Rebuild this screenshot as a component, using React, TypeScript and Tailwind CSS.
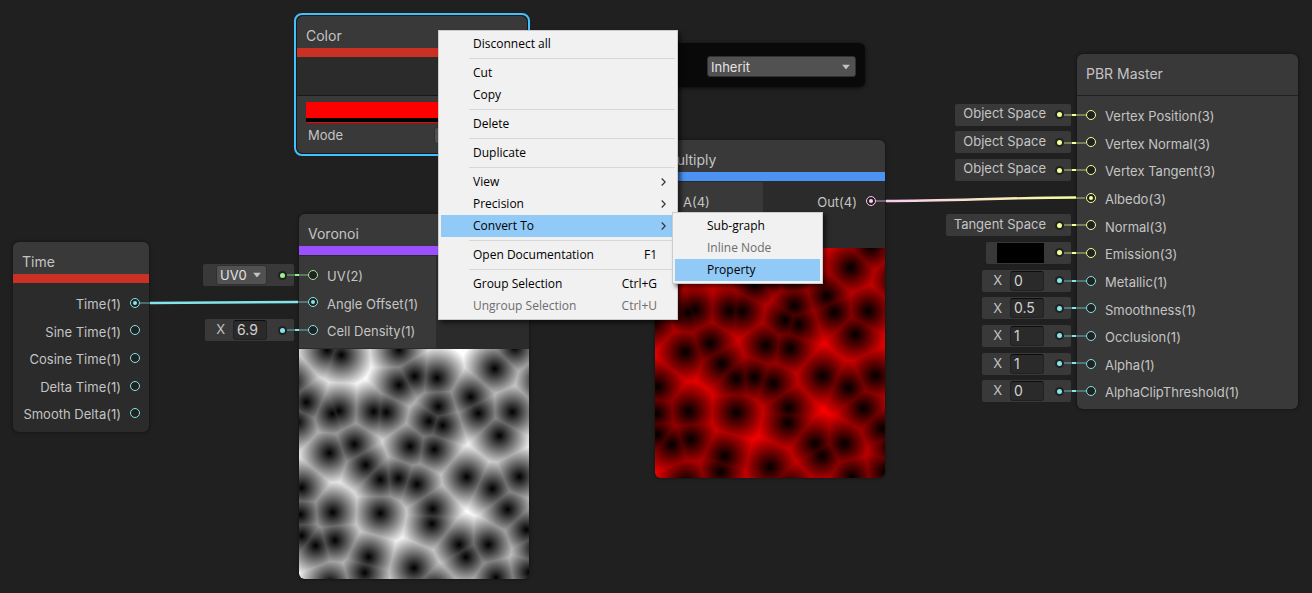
import React from "react";

type Tone = "cyan" | "yellow" | "green" | "pink";

const TONE_TEXT: Record<Tone, string> = {
  cyan: "text-[#84e4e7]",
  yellow: "text-[#f6ff9a]",
  green: "text-[#9aef92]",
  pink: "text-[#fbcbf4]",
};

const TONE_HEX: Record<Tone, string> = {
  cyan: "#84e4e7",
  yellow: "#f6ff9a",
  green: "#9aef92",
  pink: "#fbcbf4",
};

/* ---------- Voronoi preview ---------- */

type Point = [number, number];

const SEEDS: Point[] = [
  [85, 3], [127, 18], [300, 2], [648, -4], [347, 82], [300, 108], [414, 87], [587, 59],
  [22, 160], [100, 194], [120, 186], [224, 188], [262, 190], [418, 173], [390, 217],
  [431, 229], [515, 144], [538, 193], [640, 189], [601, 260], [-6, 220], [166, 286],
  [91, 312], [200, 348], [333, 292], [406, 301], [244, 392], [298, 388], [354, 406],
  [503, 384], [580, 419], [661, 383], [8, 416], [101, 490], [4, 497], [244, 493],
  [401, 480], [399, 524], [626, 481], [682, 542], [480, 587], [501, 624], [568, 587],
  [8, 560], [50, 590], [108, 574], [209, 624], [197, 671], [345, 657], [93, 702],
  [591, 687], [690, 670], [726, 95], [710, 598], [405, 718], [-22, 100],
];

const SIZE = 690;
const REACH = 102;

function cellFor(index: number): Point[] {
  const [sx, sy] = SEEDS[index];
  let poly: Point[] = [
    [sx - 200, sy - 200],
    [sx + 200, sy - 200],
    [sx + 200, sy + 200],
    [sx - 200, sy + 200],
  ];
  SEEDS.forEach(([ox, oy], other) => {
    if (other === index) return;
    const nx = ox - sx;
    const ny = oy - sy;
    const limit = (nx * (ox + sx) + ny * (oy + sy)) / 2;
    const side = (p: Point) => p[0] * nx + p[1] * ny - limit;
    const next: Point[] = [];
    poly.forEach((a, i) => {
      const b = poly[(i + 1) % poly.length];
      const da = side(a);
      const db = side(b);
      if (da <= 0) next.push(a);
      if (da < 0 !== db < 0) {
        const t = da / (da - db);
        next.push([a[0] + (b[0] - a[0]) * t, a[1] + (b[1] - a[1]) * t]);
      }
    });
    poly = next;
  });
  return poly;
}

const CELLS = SEEDS.map((_, i) => cellFor(i).map((p) => p.map((v) => v.toFixed(1)).join(",")).join(" "));

function VoronoiPreview({ id, color }: { id: string; color: string }) {
  return (
    <svg viewBox={`0 0 ${SIZE} ${SIZE}`} className="block aspect-square w-full rounded-b-md" aria-hidden="true">
      <defs>
        {SEEDS.map(([x, y], i) => (
          <radialGradient key={i} id={`${id}-${i}`} gradientUnits="userSpaceOnUse" cx={x} cy={y} r={REACH}>
            <stop offset="0" stopColor="#000" />
            <stop offset="1" stopColor={color} />
          </radialGradient>
        ))}
      </defs>
      {CELLS.map((points, i) => (
        <polygon key={i} points={points} fill={`url(#${id}-${i})`} stroke={`url(#${id}-${i})`} strokeWidth="3" />
      ))}
    </svg>
  );
}

/* ---------- Node parts ---------- */

function Port({ tone, connected }: { tone: Tone; connected?: boolean }) {
  return (
    <span className={`flex size-[10px] shrink-0 items-center justify-center rounded-full border border-current bg-[#212121] ${TONE_TEXT[tone]}`}>
      {connected && <span className="size-1 rounded-full bg-current" />}
    </span>
  );
}

function InputRow({ label, tone, connected }: { label: string; tone: Tone; connected?: boolean }) {
  return (
    <li className="flex items-center gap-[9px] pl-[9px]">
      <Port tone={tone} connected={connected} />
      <span className="pt-1">{label}</span>
    </li>
  );
}

function OutputRow({ label, tone, connected }: { label: string; tone: Tone; connected?: boolean }) {
  return (
    <li className="flex items-center justify-end gap-[9px] pr-[9px]">
      <span className="pt-1">{label}</span>
      <Port tone={tone} connected={connected} />
    </li>
  );
}

function NodeHeader({ title, stripe }: { title: string; stripe: string }) {
  return (
    <header>
      <h2 className="h-8 rounded-t-md bg-[#393939] px-[9px] pt-[9px] text-sm leading-[22px]">{title}</h2>
      <div className={`h-[9px] ${stripe}`} />
    </header>
  );
}

const NODE = "absolute rounded-md bg-[#2b2b2b] shadow-[0_0_0_1px_#191919,0_0_4px_#0006]";

function Chip({ children, tone, wide }: { children: React.ReactNode; tone: Tone; wide?: boolean }) {
  return (
    <div className={`flex h-[22px] items-center rounded-xs bg-[#393939] pr-[7px] whitespace-nowrap ${wide ? "gap-[9px] pl-2" : "gap-[11px] pl-[11px]"}`}>
      {children}
      <span className={`flex size-[9px] items-center justify-center rounded-full bg-[#212121] ${TONE_TEXT[tone]}`}>
        <span className="size-[5px] rounded-full bg-current" />
      </span>
    </div>
  );
}

function NumberChip({ id, value }: { id: string; value: string }) {
  return (
    <Chip tone="cyan">
      <div className="flex items-center gap-2">
        <label htmlFor={id} className="text-[13px]">X</label>
        <input
          id={id}
          defaultValue={value}
          className="h-5 w-[34px] rounded-[3px] border border-[#212121] border-t-[#0d0d0d] bg-[#2a2a2a] px-[3px] text-sm text-[#d2d2d2] outline-none"
        />
      </div>
    </Chip>
  );
}

function Dropdown({ id, label, value, className }: { id: string; label: string; value: string; className: string }) {
  return (
    <div className={`relative text-[#e4e4e4] ${className}`}>
      <label htmlFor={id} className="sr-only">{label}</label>
      <select id={id} defaultValue={value} className="block h-full w-full appearance-none rounded-[3px] border border-[#303030] bg-[#515151] px-[3px] text-[13px] leading-4 outline-none">
        <option>{value}</option>
      </select>
      <svg viewBox="0 0 8 5" className="pointer-events-none absolute top-1/2 right-[6px] h-[5px] w-2 -translate-y-1/2 fill-[#c4c4c4]" aria-hidden="true">
        <path d="M0 0h8L4 5z" />
      </svg>
    </div>
  );
}

/* ---------- Wires ---------- */

function Stub({ x, y, tone }: { x: number; y: number; tone: Tone }) {
  return (
    <g stroke={TONE_HEX[tone]} strokeWidth="2">
      <path d={`M${x + 5} ${y}H${x + 27}`} opacity="0.35" />
      <path d={`M${x + 13} ${y}H${x + 17}`} />
    </g>
  );
}

const MASTER_STUBS: { row: number; tone: Tone }[] = [
  { row: 0, tone: "yellow" },
  { row: 1, tone: "yellow" },
  { row: 2, tone: "yellow" },
  { row: 4, tone: "yellow" },
  { row: 5, tone: "yellow" },
  { row: 6, tone: "cyan" },
  { row: 7, tone: "cyan" },
  { row: 8, tone: "cyan" },
  { row: 9, tone: "cyan" },
  { row: 10, tone: "cyan" },
];

function Wires() {
  return (
    <svg width="1312" height="593" className="pointer-events-none absolute top-0 left-0" fill="none" aria-hidden="true">
      <defs>
        <linearGradient id="albedo-wire" gradientUnits="userSpaceOnUse" x1="886" y1="0" x2="1076" y2="0">
          <stop offset="0" stopColor="#fbcbf4" />
          <stop offset="1" stopColor="#f6ff9a" />
        </linearGradient>
      </defs>
      <g stroke="#84e4e7" strokeWidth="2">
        <path d="M140 303H150M298 302H308" opacity="0.35" />
        <path d="M150 303C200 303 250 302 298 302" strokeWidth="2.4" />
      </g>
      <g strokeWidth="2">
        <path d="M876 201H886" stroke="#fbcbf4" opacity="0.35" />
        <path d="M1076 198H1085" stroke="#f6ff9a" opacity="0.35" />
        <path d="M886 201C950 201 1010 197.5 1076 197.5" stroke="url(#albedo-wire)" strokeWidth="2.4" />
      </g>
      <Stub x={282} y={275} tone="green" />
      <Stub x={282} y={330} tone="cyan" />
      {MASTER_STUBS.map(({ row, tone }) => (
        <Stub key={row} x={1059} y={Math.round(115 + row * 27.6)} tone={tone} />
      ))}
    </svg>
  );
}

/* ---------- Context menu ---------- */

interface Item {
  label: string;
  hint?: string;
  submenu?: boolean;
  active?: boolean;
  disabled?: boolean;
}

const MENU_GROUPS: Item[][] = [
  [{ label: "Disconnect all" }],
  [{ label: "Cut" }, { label: "Copy" }],
  [{ label: "Delete" }],
  [{ label: "Duplicate" }],
  [
    { label: "View", submenu: true },
    { label: "Precision", submenu: true },
    { label: "Convert To", submenu: true, active: true },
  ],
  [{ label: "Open Documentation", hint: "F1" }],
  [
    { label: "Group Selection", hint: "Ctrl+G" },
    { label: "Ungroup Selection", hint: "Ctrl+U", disabled: true },
  ],
];

const SUBMENU: Item[] = [
  { label: "Sub-graph" },
  { label: "Inline Node", disabled: true },
  { label: "Property", active: true },
];

function MenuItem({ item }: { item: Item }) {
  return (
    <button
      type="button"
      role="menuitem"
      disabled={item.disabled}
      className={`flex h-[22px] w-full items-center justify-between pl-8 text-left ${item.submenu ? "pr-[9px]" : "pr-[18px]"} ${item.active ? "bg-[#91c9f7]" : ""} ${item.disabled ? "text-[#6d6d6d]" : "text-black"}`}
    >
      <span>{item.label}</span>
      {item.hint && <span>{item.hint}</span>}
      {item.submenu && (
        <svg viewBox="0 0 5 8" className="h-2 w-[5px] fill-none stroke-[#333]" aria-hidden="true">
          <path d="M0.7 0.5L4.2 4L0.7 7.5" strokeWidth="1.2" />
        </svg>
      )}
    </button>
  );
}

const MENU = "absolute border border-[#ccc] bg-[#f1f1f1] p-[2px] font-['Open_Sans','Noto_Sans',sans-serif] text-xs shadow-[3px_3px_4px_#0008]";

function ContextMenu() {
  return (
    <>
      <div role="menu" aria-label="Node actions" className={`${MENU} top-[30px] left-[438px] w-60`}>
        {MENU_GROUPS.map((group, i) => (
          <React.Fragment key={i}>
            {i > 0 && <div role="separator" className="my-[3px] ml-7 h-px bg-[#d7d7d7]" />}
            {group.map((item) => (
              <MenuItem key={item.label} item={item} />
            ))}
          </React.Fragment>
        ))}
      </div>
      <div role="menu" aria-label="Convert To" className={`${MENU} top-[212px] left-[672px] w-[151px]`}>
        {SUBMENU.map((item) => (
          <MenuItem key={item.label} item={item} />
        ))}
      </div>
    </>
  );
}

/* ---------- Graph ---------- */

export default function App() {
  return (
    <main className="relative min-h-screen overflow-hidden bg-[#202020] font-[Inter,sans-serif] text-[13px] text-[#c4c4c4]">
      <section className={`${NODE} top-[242px] left-[13px] w-[136px]`}>
        <NodeHeader title="Time" stripe="bg-[#ca3023]" />
        <ul className="mt-[6px] mb-[5px] grid h-[138px] auto-rows-fr">
          <OutputRow label="Time(1)" tone="cyan" connected />
          <OutputRow label="Sine Time(1)" tone="cyan" />
          <OutputRow label="Cosine Time(1)" tone="cyan" />
          <OutputRow label="Delta Time(1)" tone="cyan" />
          <OutputRow label="Smooth Delta(1)" tone="cyan" />
        </ul>
      </section>

      <section className="absolute top-[13px] left-[294px] w-[236px] rounded-lg border-2 border-[#44c0ff] bg-[#191919] p-px">
        <NodeHeader title="Color" stripe="bg-[#ca3023]" />
        <div className="h-[38px] bg-[#2b2b2b]" />
        <div className="mt-px h-[57px] rounded-b-md bg-[#393939] px-[9px] pt-[6px]">
          <div className="h-[21px] border-b border-[#f00] bg-black">
            <div className="h-4 bg-[#f00]" />
          </div>
          <div className="flex items-center justify-between pt-[3px] pl-[2px]">
            <label htmlFor="color-mode">Mode</label>
            <select id="color-mode" className="h-[17px] w-[84px] appearance-none rounded-[3px] border border-[#303030] bg-[#515151] px-1 text-xs leading-none">
              <option>Default</option>
            </select>
          </div>
        </div>
      </section>

      <div className="absolute top-[43px] left-[545px] flex w-80 items-center justify-end rounded-md bg-[#090909] pt-[13px] pr-[9px] pb-[10px] shadow-[0_1px_4px_#000a]">
        <Dropdown id="precision" label="Precision" value="Inherit" className="h-[21px] w-[149px]" />
      </div>

      <section className={`${NODE} top-[214px] left-[299px] w-[230px]`}>
        <NodeHeader title="Voronoi" stripe="bg-[#9b50ff]" />
        <div className="mt-px flex">
          <ul className="grid h-[92px] w-[137px] auto-rows-fr bg-[#393939] pt-[5px] pb-1">
            <InputRow label="UV(2)" tone="green" />
            <InputRow label="Angle Offset(1)" tone="cyan" connected />
            <InputRow label="Cell Density(1)" tone="cyan" />
          </ul>
        </div>
        <div className="mt-px">
          <VoronoiPreview id="cells" color="#fff" />
        </div>
      </section>

      <div className="absolute top-[264px] left-[203px] flex w-[91px] flex-col items-end gap-[33px]">
        <Chip tone="green">
          <div className="pl-[2px]">
            <Dropdown id="uv-channel" label="UV channel" value="UV0" className="h-5 w-[51px]" />
          </div>
        </Chip>
        <NumberChip id="cell-density" value="6.9" />
      </div>

      <section className={`${NODE} top-[140px] left-[655px] w-[230px]`}>
        <NodeHeader title="Multiply" stripe="bg-[#4b92f3]" />
        <div className="mt-px flex">
          <ul className="grid h-[65px] w-[108px] auto-rows-fr bg-[#393939] pt-[5px] pb-1">
            <InputRow label="A(4)" tone="pink" connected />
            <InputRow label="B(4)" tone="pink" connected />
          </ul>
          <ul className="grid h-[65px] grow grid-rows-2 pt-[5px] pb-1">
            <OutputRow label="Out(4)" tone="pink" connected />
          </ul>
        </div>
        <div className="mt-px">
          <VoronoiPreview id="tinted" color="#f00" />
        </div>
      </section>

      <div className="absolute top-[101px] left-[941px] grid h-[304px] w-[130px] auto-rows-fr items-center justify-items-end">
        <Chip tone="yellow" wide><span className="pb-[2px]">Object Space</span></Chip>
        <Chip tone="yellow" wide><span className="pb-[2px]">Object Space</span></Chip>
        <Chip tone="yellow" wide><span className="pb-[2px]">Object Space</span></Chip>
        <span />
        <Chip tone="yellow" wide><span className="pb-[2px]">Tangent Space</span></Chip>
        <Chip tone="yellow">
          <button type="button" aria-label="Emission color" className="h-5 w-[47px] bg-black" />
        </Chip>
        <NumberChip id="metallic" value="0" />
        <NumberChip id="smoothness" value="0.5" />
        <NumberChip id="occlusion" value="1" />
        <NumberChip id="alpha" value="1" />
        <NumberChip id="alpha-clip" value="0" />
      </div>

      <section className={`${NODE} top-[54px] left-[1077px] w-[221px] bg-[#393939]`}>
        <h2 className="border-b border-[#212121] px-[9px] pt-2 pb-[10px] text-sm leading-[23px]">PBR Master</h2>
        <ul className="mt-[5px] mb-1 grid h-[304px] auto-rows-fr">
          <InputRow label="Vertex Position(3)" tone="yellow" />
          <InputRow label="Vertex Normal(3)" tone="yellow" />
          <InputRow label="Vertex Tangent(3)" tone="yellow" />
          <InputRow label="Albedo(3)" tone="yellow" connected />
          <InputRow label="Normal(3)" tone="yellow" />
          <InputRow label="Emission(3)" tone="yellow" />
          <InputRow label="Metallic(1)" tone="cyan" />
          <InputRow label="Smoothness(1)" tone="cyan" />
          <InputRow label="Occlusion(1)" tone="cyan" />
          <InputRow label="Alpha(1)" tone="cyan" />
          <InputRow label="AlphaClipThreshold(1)" tone="cyan" />
        </ul>
      </section>

      <Wires />
      <ContextMenu />
    </main>
  );
}
